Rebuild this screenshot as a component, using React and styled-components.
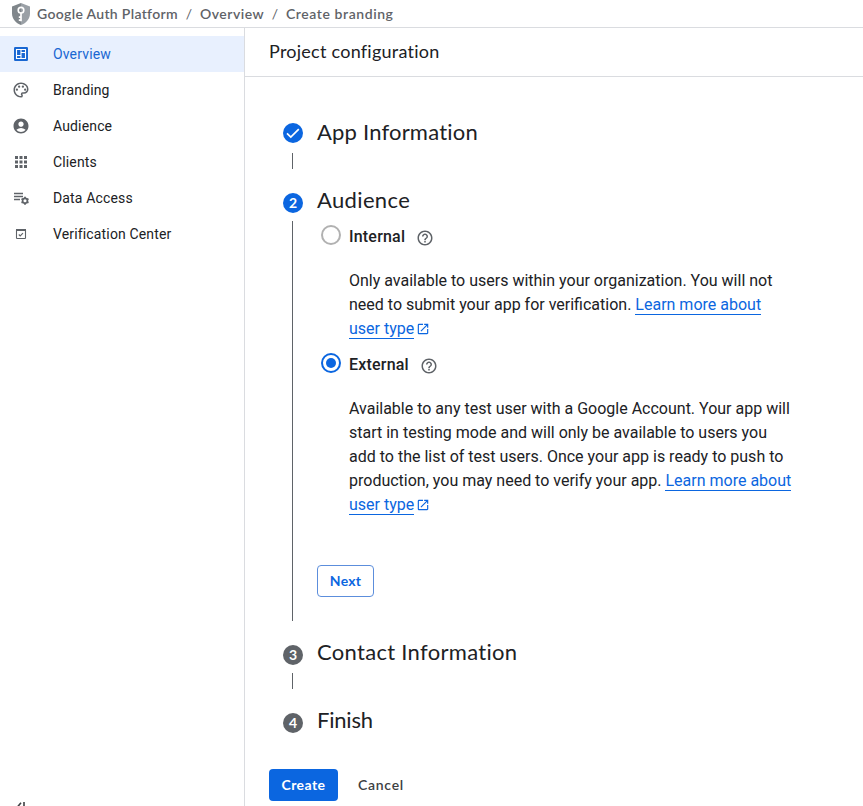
import React from "react";
import styled, { createGlobalStyle } from "styled-components";
import { MdOutlinePalette, MdAccountCircle, MdApps, MdHelpOutline, MdOpenInNew } from "react-icons/md";

const GlobalStyle = createGlobalStyle`
  * { box-sizing: border-box; }
  html, body { margin: 0; height: 100%; background: #fff; overflow: hidden; }
  #root { height: 100%; }
  body { font-family: Roboto, "Liberation Sans", sans-serif; color: #202124; }
  svg { display: block; flex: none; }
`;

const display = `font-family: Lato, Roboto, sans-serif;`;

const Page = styled.div`
  height: 100vh;
  display: flex;
  flex-direction: column;
  overflow: hidden;
`;
const TopBar = styled.header`
  ${display}
  flex: none;
  height: 28px;
  border-bottom: 1px solid #dadce0;
  display: flex;
  align-items: center;
  padding-left: 12px;
  font-size: 14px;
  line-height: 17px;
  font-weight: 600;
  color: #5f6368;
  white-space: nowrap;
`;
const Crumb = styled.span`
  width: ${(p) => p.$width}px;
  letter-spacing: ${(p) => p.$spacing}px;
`;
const Slash = styled.span`
  width: 22px;
  text-align: center;
  font-weight: 400;
`;
const ShieldWrap = styled.span`
  width: 25px;
`;
const Body = styled.div`
  flex: 1;
  min-height: 0;
  display: flex;
`;
const Sidebar = styled.aside`
  flex: none;
  width: 245px;
  border-right: 1px solid #dadce0;
  padding-top: 8px;
  display: flex;
  flex-direction: column;
`;
const NavItem = styled.a`
  flex: none;
  height: 36px;
  display: flex;
  align-items: center;
  padding-left: 12px;
  font-size: 14px;
  letter-spacing: 0.15px;
  background: ${(p) => (p.$active ? "#e8f0fe" : "transparent")};
  color: ${(p) => (p.$active ? "#1967d2" : "#202124")};
`;
const NavIcon = styled.span`
  width: 41px;
  color: ${(p) => (p.$active ? "#1967d2" : "#5f6368")};
`;
const Collapse = styled.div`
  margin-top: auto;
  height: 4px;
  padding-left: 14px;
  color: #3c4043;
  overflow: hidden;
`;
const Main = styled.main`
  flex: 1;
  min-width: 0;
`;
const PageHeader = styled.div`
  height: 49px;
  border-bottom: 1px solid #dadce0;
  padding: 0 0 3px 24px;
  display: flex;
  align-items: center;
`;
const PageTitle = styled.h1`
  ${display}
  margin: 0;
  font-size: 18px;
  font-weight: 400;
  letter-spacing: ${(p) => p.$spacing}px;
`;
const Stepper = styled.div`
  padding: 40px 0 0 38px;
`;
const Step = styled.section`
  display: grid;
  grid-template-columns: 20px 1fr;
  column-gap: 14px;
`;
const Rail = styled.div`
  display: flex;
  flex-direction: column;
  align-items: center;
  padding: ${(p) => (p.$done ? 6 : 8)}px 0 16px;
`;
const Marker = styled.span`
  flex: none;
  width: 20px;
  height: 20px;
  border-radius: 50%;
  display: flex;
  align-items: center;
  justify-content: center;
  background: ${(p) => (p.$active ? "#0b66e0" : "#5f6368")};
  color: #fff;
  font: 700 14px/20px Lato, Roboto, sans-serif;
`;
const Connector = styled.span`
  flex: 1;
  width: 1px;
  margin: ${(p) => (p.$done ? 10 : 8)}px 1px 0 0;
  background: #5f6368;
`;
const StepContent = styled.div`
  min-height: ${(p) => (p.$last ? 48 : 68)}px;
`;
const StepTitle = styled.h2`
  ${display}
  margin: 0;
  height: 32px;
  font-size: 22px;
  line-height: 29px;
  font-weight: 400;
  letter-spacing: ${(p) => p.$spacing}px;
`;
const Options = styled.div`
  padding: 7px 0 0 4px;
`;
const Option = styled.div`
  display: grid;
  grid-template-columns: 20px 452px;
  column-gap: 8px;
  height: ${(p) => p.$height}px;
`;
const Radio = styled.span`
  width: 20px;
  height: 20px;
  margin-top: 1px;
  border: 2px solid ${(p) => (p.$checked ? "#0b66e0" : "#b1b1b1")};
  border-radius: 50%;
  display: flex;
  align-items: center;
  justify-content: center;
  &::after {
    content: "";
    width: 10px;
    height: 10px;
    border-radius: 50%;
    background: ${(p) => (p.$checked ? "#0b66e0" : "transparent")};
  }
`;
const OptionLabel = styled.div`
  height: 24px;
  display: flex;
  align-items: center;
  gap: 11px;
  font-size: 16px;
  font-weight: 500;
  letter-spacing: 0.2px;
  color: #202124;
  svg { color: #5f6368; margin-top: 4px; }
`;
const Description = styled.p`
  margin: 21px 0 0;
  font-size: 16px;
  line-height: 24px;
  white-space: nowrap;
`;
const Link = styled.a`
  color: #0b66e0;
  border-bottom: 1px solid #0b66e0;
`;
const External = styled.span`
  display: inline-block;
  margin-left: 2px;
  vertical-align: -2px;
  color: #0b66e0;
`;
const Actions = styled.div`
  display: flex;
  padding: 16px 0 0 24px;
`;
const Button = styled.button`
  ${display}
  height: 32px;
  padding: 0 0 2px;
  width: ${(p) => p.$width}px;
  border-radius: 4px;
  border: ${(p) => (p.$kind === "outline" ? "1px solid #5c8edc" : "0")};
  background: ${(p) => (p.$kind === "primary" ? "#0b66e0" : "transparent")};
  color: ${(p) => (p.$kind === "primary" ? "#fff" : p.$kind === "outline" ? "#0b66e0" : "#3c4043")};
  font-size: 14px;
  font-weight: ${(p) => (p.$kind === "text" ? 600 : 700)};
  letter-spacing: ${(p) => p.$spacing}px;
`;
const NextRow = styled.div`
  height: 109px;
  padding-top: 37px;
`;

const Shield = () => (
  <svg width="18" height="22" viewBox="0 0 18 22">
    <path d="M9 0 0 3.4v7.1C0 15.6 3.8 20.4 9 22z" fill="#80868b" />
    <path d="M9 0l9 3.4v7.1c0 5.1-3.8 9.9-9 11.5z" fill="#9aa0a6" />
    <circle cx="9" cy="7.2" r="2.8" fill="none" stroke="#fff" strokeWidth="1.6" />
    <path d="M9 10v8.2M9 14.2H6.8M9 17.2H6.8" stroke="#fff" strokeWidth="1.7" fill="none" />
  </svg>
);
const OverviewIcon = () => (
  <svg width="18" height="18" viewBox="0 0 18 18">
    <rect x="2" y="2" width="14" height="14" rx="1.2" fill="currentColor" />
    <path
      d="M4.5 4.5h9v9h-9zM9 4.5v9M4.5 10.5H9M9 7.5h4.5"
      fill="none"
      stroke="#fff"
      strokeWidth="1.1"
    />
  </svg>
);
const DataAccessIcon = () => (
  <svg width="18" height="18" viewBox="0 0 18 18">
    <path d="M2 4.5h9M2 7.5h9M2 10.5h6" stroke="currentColor" strokeWidth="1.4" fill="none" />
    <circle cx="13" cy="11.7" r="2.4" stroke="currentColor" strokeWidth="1.7" fill="none" />
    <path d="M13 7.7v1.6M13 14.1v1.6M9.5 9.7l1.4.8M15.1 12.9l1.4.8M9.5 13.7l1.4-.8M15.1 10.5l1.4-.8" stroke="currentColor" strokeWidth="1.8" />
  </svg>
);
const VerificationIcon = () => (
  <svg width="18" height="18" viewBox="0 0 18 18" fill="none" stroke="currentColor">
    <rect x="4.5" y="4.5" width="9" height="9" rx=".6" strokeWidth="1.1" />
    <path d="M4 5h10" strokeWidth="2" />
    <path d="m6.8 9.5 1.4 1.4 2.8-2.8" strokeWidth="1.1" />
  </svg>
);
const Check = () => (
  <svg width="20" height="20" viewBox="0 0 20 20">
    <path d="m4 10.3 3.8 3.8 8-8" fill="none" stroke="#fff" strokeWidth="1.7" />
  </svg>
);
const CollapseIcon = () => (
  <svg width="14" height="14" viewBox="0 0 14 14" fill="none" stroke="currentColor" strokeWidth="1.6">
    <path d="M7 .7 2.2 6.5 7 12.3M10 0v14" />
  </svg>
);

const navItems = [
  { label: "Overview", icon: <OverviewIcon />, active: true },
  { label: "Branding", icon: <MdOutlinePalette size={18} /> },
  { label: "Audience", icon: <MdAccountCircle size={18} /> },
  { label: "Clients", icon: <MdApps size={18} /> },
  { label: "Data Access", icon: <DataAccessIcon /> },
  { label: "Verification Center", icon: <VerificationIcon /> },
];

function StepRow({ number, title, spacing, done, active, last, children }) {
  return (
    <Step>
      <Rail $done={done}>
        <Marker $active={done || active}>{done ? <Check /> : number}</Marker>
        {!last && <Connector $done={done} />}
      </Rail>
      <StepContent $last={last}>
        <StepTitle $spacing={spacing}>{title}</StepTitle>
        {children}
      </StepContent>
    </Step>
  );
}

const LearnMore = () => (
  <>
    <Link>Learn more about</Link>
    <br />
    <Link>user type</Link>
    <External><MdOpenInNew size={14} /></External>
  </>
);

export default function App() {
  return (
    <Page>
      <GlobalStyle />
      <TopBar>
        <ShieldWrap><Shield /></ShieldWrap>
        <Crumb $width={141} $spacing={0.32}>Google Auth Platform</Crumb>
        <Slash>/</Slash>
        <Crumb $width={64} $spacing={0.5}>Overview</Crumb>
        <Slash>/</Slash>
        <Crumb $width={108} $spacing={0.57}>Create branding</Crumb>
      </TopBar>
      <Body>
        <Sidebar>
          {navItems.map((n) => (
            <NavItem key={n.label} $active={n.active}>
              <NavIcon $active={n.active}>{n.icon}</NavIcon>
              {n.label}
            </NavItem>
          ))}
          <Collapse><CollapseIcon /></Collapse>
        </Sidebar>
        <Main>
          <PageHeader><PageTitle $spacing={0.25}>Project configuration</PageTitle></PageHeader>
          <Stepper>
            <StepRow title="App Information" spacing={0.2} done />
            <StepRow number="2" title="Audience" spacing={0.35} active>
              <Options>
                <Option $height={128}>
                  <Radio />
                  <div>
                    <OptionLabel>Internal<MdHelpOutline size={18} /></OptionLabel>
                    <Description>
                      Only available to users within your organization. You will not<br />
                      need to submit your app for verification. <LearnMore />
                    </Description>
                  </div>
                </Option>
                <Option $height={176}>
                  <Radio $checked />
                  <div>
                    <OptionLabel>External<MdHelpOutline size={18} /></OptionLabel>
                    <Description>
                      Available to any test user with a Google Account. Your app will<br />
                      start in testing mode and will only be available to users you<br />
                      add to the list of test users. Once your app is ready to push to<br />
                      production, you may need to verify your app. <LearnMore />
                    </Description>
                  </div>
                </Option>
              </Options>
              <NextRow><Button $kind="outline" $width={57} $spacing={0.2}>Next</Button></NextRow>
            </StepRow>
            <StepRow number="3" title="Contact Information" spacing={0.3} />
            <StepRow number="4" title="Finish" spacing={-0.2} last />
          </Stepper>
          <Actions>
            <Button $kind="primary" $width={69} $spacing={0.45}>Create</Button>
            <Button $kind="text" $width={86} $spacing={0.7}>Cancel</Button>
          </Actions>
        </Main>
      </Body>
    </Page>
  );
}
